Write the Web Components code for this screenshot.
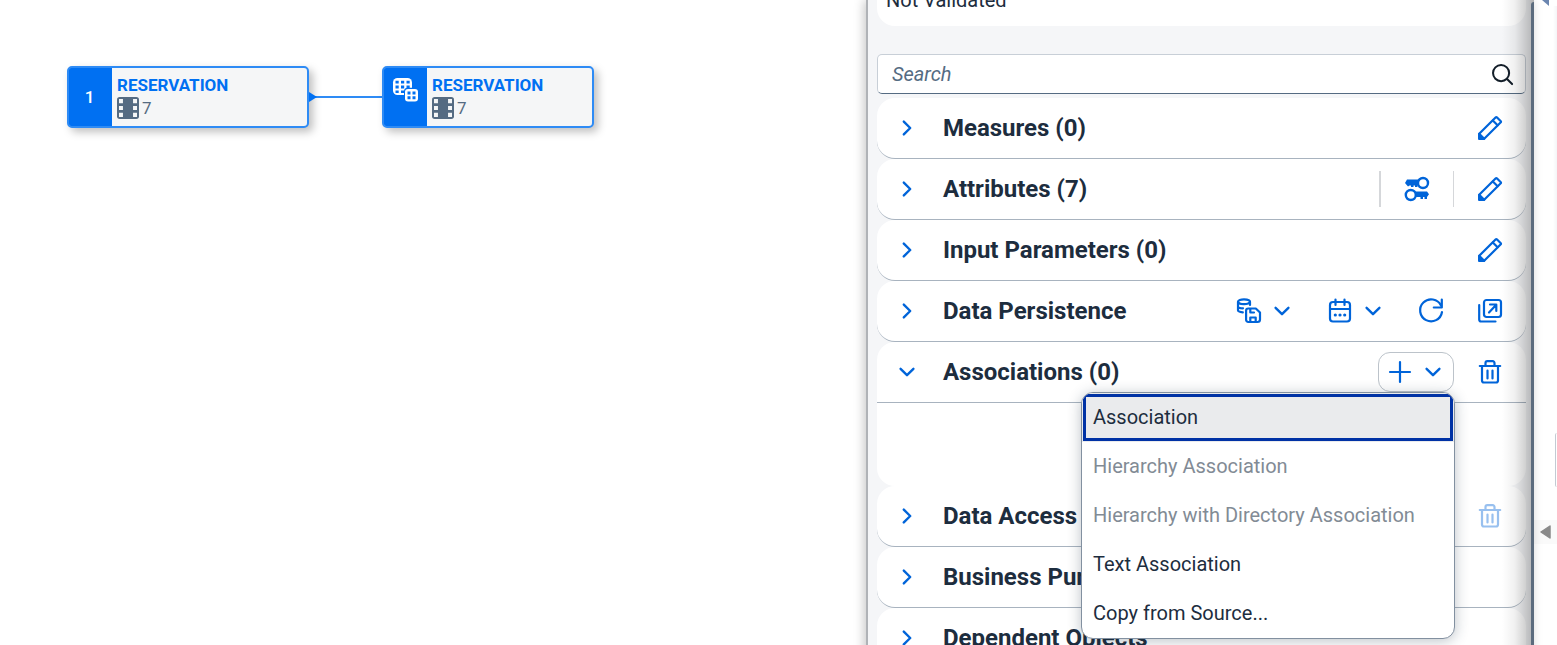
<!DOCTYPE html>
<html lang="en">
<head>
<meta charset="utf-8">
<meta name="viewport" content="width=device-width, initial-scale=1">
<title>View Editor</title>
<style>
    html, body {
        height: 100%;
        margin: 0;
    }

    body {
        font-family: Roboto, "Liberation Sans", sans-serif;
        font-size: 20px;
        line-height: 24px;
        color: #1d2d3e;
        background: #fff;
        overflow: hidden;
    }
</style>
</head>
<body>

<model-editor>
    <model-canvas slot="canvas">
        <model-node name="RESERVATION" columns="7" wide>1</model-node>
        <model-edge></model-edge>
        <model-node name="RESERVATION" columns="7"><ui-icon name="cubes"></ui-icon></model-node>
    </model-canvas>

    <property-panel slot="panel">
        <status-card>Not Validated</status-card>
        <search-field placeholder="Search"></search-field>
        <panel-section heading="Measures (0)">
            <tool-button slot="actions" icon="edit" label="Edit measures"></tool-button>
        </panel-section>
        <panel-section heading="Attributes (7)">
            <tool-separator slot="actions" strong></tool-separator>
            <tool-button slot="actions" icon="keys" label="Set compound key"></tool-button>
            <tool-separator slot="actions"></tool-separator>
            <tool-button slot="actions" icon="edit" label="Edit attributes"></tool-button>
        </panel-section>
        <panel-section heading="Input Parameters (0)">
            <tool-button slot="actions" icon="edit" label="Edit input parameters"></tool-button>
        </panel-section>
        <panel-section heading="Data Persistence" loose>
            <tool-button slot="actions" icon="persist" label="Persist data" menu></tool-button>
            <tool-button slot="actions" icon="calendar" label="Schedule" menu></tool-button>
            <tool-button slot="actions" icon="refresh" label="Refresh"></tool-button>
            <tool-button slot="actions" icon="open" label="Open monitor"></tool-button>
        </panel-section>
        <panel-section heading="Associations (0)" open>
            <menu-anchor slot="actions">
                <tool-button icon="add" label="Add association" menu outlined></tool-button>
                <drop-menu slot="menu">
                    <menu-entry active>Association</menu-entry>
                    <menu-entry disabled>Hierarchy Association</menu-entry>
                    <menu-entry disabled>Hierarchy with Directory Association</menu-entry>
                    <menu-entry>Text Association</menu-entry>
                    <menu-entry>Copy from Source...</menu-entry>
                </drop-menu>
            </menu-anchor>
            <tool-button slot="actions" icon="delete" label="Delete association"></tool-button>
        </panel-section>
        <panel-section heading="Data Access">
            <tool-button slot="actions" icon="delete" label="Delete access control" disabled></tool-button>
        </panel-section>
        <panel-section heading="Business Purpose"></panel-section>
        <panel-section heading="Dependent Objects"></panel-section>
    </property-panel>

    <side-rail slot="rail"></side-rail>
</model-editor>

<script>
(function() {
    // icons share a 24 x 24 grid and take their colour from the text
    const icons = {
        right: '<path d="M8.500 5 15.500 12l-7 7"/>',
        down: '<path d="M5 8.500l7 7 7-7"/>',
        search: '<circle cx="11" cy="11" r="8.800"/><path d="M17.500 17.500 23 23"/>',
        add: '<path d="M12 2v20M2 12h20"/>',
        edit: '<path d="M1.200 22.800v-5L17.800 1.300a.7.7 0 0 1 1 0l4 4a.7.7 0 0 1 0 1L6.200 22.800z"/><path d="M14.800 4.500l4.800 4.800"/><path fill="currentColor" d="M1.200 17.800l5 5h-5z"/>',
        keys: '<g stroke-width="2.400"><circle cx="18" cy="6" r="5"/><circle cx="5.800" cy="18" r="5"/></g>' +
            '<path fill="currentColor" stroke="none" d="M2 2.500h12v6h-1.500V10H10V8.500H8.500V10H6V8.500H4.500L3 9.500 0 6zM10 14.500H22l2 2.800-2 2.700v2h-2.500v-2H18v2h-2.500v-2H10z"/>',
        persist: '<ellipse cx="7" cy="2.800" rx="6" ry="2.400"/><path d="M1 3v8.300c0 1.200 2 1.800 4.800 2M1 7.200c0 1.300 2 2 5 2.100M13 3v3"/>' +
            '<path d="M11.300 9.500h7.500l4.200 4V20.500a2.500 2.500 0 0 1-2.500 2.500h-9.200a2.200 2.200 0 0 1-2.200-2.300V11.700a2.200 2.200 0 0 1 2.200-2.200z"/><path d="M13.300 10v3.500h3.700M13.300 22.800v-4.300h5.400v4.300"/>',
        calendar: '<rect x="2" y="3" width="20" height="19.500" rx="3"/><path d="M2 10h20M7.500.5V6M16.500.5V6"/><path stroke-width="3.200" d="M7.300 16h.01M12 16h.01M16.700 16h.01"/>',
        refresh: '<path d="M22 6.500A11 11 0 1 0 23 13"/><path d="M22.800.5v8h-8"/>',
        open: '<rect x="6" y="1" width="17" height="17" rx="2.500"/><path d="M1.200 6v14.500a2 2 0 0 0 2 2H17.500M11 13.500l7-7.500M12 5.500h6.300v6.500"/>',
        delete: '<path d="M1.800 6h20.400M4 6v14.500a2 2 0 0 0 2 2h12a2 2 0 0 0 2-2V6M7.500 6V3a1.800 1.800 0 0 1 1.800-1.800h5.400A1.800 1.800 0 0 1 16.500 3v3M9.500 10.500v8M14.500 10.500v8"/>',
        cubes: '<g stroke="none"><rect fill="currentColor" width="19" height="17" rx="4.500"/>' +
            '<path fill="#0070f2" d="M2.500 2.800h3.200v2.700H2.500zM8 2.800h3.200v2.700H8zM13.500 2.800h3.200v2.700h-3.200zM2.500 7.500h3.200v3H2.500zM8 7.500h3.200v3H8zM13.500 7.500h3.200v3h-3.200zM2.500 12.500h3.200v2.500H2.500zM8 12.500h3.200v2.500H8z"/>' +
            '<rect fill="#0070f2" x="11" y="9.800" width="15" height="15" rx="3.500"/><rect fill="currentColor" x="12" y="11" width="13" height="12.500" rx="3"/>' +
            '<path fill="#0070f2" d="M14.500 13.500h3v3h-3zM19.500 13.500h3v3h-3zM14.500 18.300h3v3h-3zM19.500 18.300h3v3h-3z"/></g>',
        film: '<rect fill="currentColor" stroke="none" x="0" y="0" width="24" height="24" rx="3"/>' +
            '<path fill="#f5f6f7" stroke="none" d="M2.200 2.200h4.300v4.600H2.200zM2.200 9.700h4.300v4.600H2.200zM2.200 17.200h4.300v4.600H2.200zM17.500 2.200h4.300v4.600h-4.300zM17.500 9.700h4.300v4.600h-4.300zM17.500 17.200h4.300v4.600h-4.300z"/>'
    };

    function icon(name) {
        return `<svg viewBox="0 0 24 24" width="24" height="24" fill="none" stroke="currentColor" stroke-width="2.200" stroke-linejoin="round" stroke-linecap="round" aria-hidden="true">${icons[name]}</svg>`;
    }

    class BaseElement extends HTMLElement {
        connectedCallback() {
            if (this.shadowRoot) {
                return;
            }

            const template = document.createElement('template');
            template.innerHTML = this.template();

            this.attachShadow({mode: 'open'});
            this.shadowRoot.appendChild(template.content.cloneNode(true));
        }

        attr(name) {
            return this.getAttribute(name) || '';
        }
    }

    class UiIcon extends BaseElement {
        template() {
            return `
<style>
    :host { display: block; height: 24px; }
    svg { display: block; overflow: visible; }
</style>
${icon(this.attr('name'))}`;
        }
    }

    class ModelEditor extends BaseElement {
        template() {
            return `
<style>
    :host {
        display: grid;
        grid-template-columns: minmax(0, 35fr) minmax(0, 27fr) 23px;
        height: 100vh;
    }
</style>
<slot name="canvas"></slot>
<slot name="panel"></slot>
<slot name="rail"></slot>`;
        }
    }

    class ModelCanvas extends BaseElement {
        template() {
            return `
<style>
    :host {
        display: flex;
        flex-direction: column;
        justify-content: space-between;
        min-width: 0;
        overflow: hidden;
    }
    .flow {
        display: flex;
        align-items: center;
        padding: 66px 0 0 67px;
    }
    .handle {
        align-self: flex-end;
        width: 21px;
        height: 3px;
        margin-right: 9px;
        background: #b9c3d0;
        clip-path: polygon(0 0, 100% 0, 80% 100%, 0 100%);
    }
</style>
<div class="flow"><slot></slot></div>
<div class="handle"></div>`;
        }
    }

    class ModelNode extends BaseElement {
        template() {
            return `
<style>
    :host {
        display: flex;
        box-sizing: border-box;
        width: 212px;
        height: 62px;
        border: 2px solid #2e8bf5;
        border-radius: 5px;
        overflow: hidden;
        font-size: 17px;
        line-height: 24px;
        background: #f5f6f7;
        box-shadow: 4px 4px 8px rgba(0, 0, 0, .25);
    }
    :host([wide]) { width: 242px; }
    .type {
        display: flex;
        align-items: center;
        justify-content: center;
        box-sizing: border-box;
        width: 41px;
        font-weight: 500;
        color: #fff;
        background: #0070f2;
        box-shadow: 0 0 0 2px #0070f2;
    }
    :host(:not([wide])) .type {
        align-items: flex-start;
        padding-top: 10px;
    }
    .text { padding: 6px 0 0 7px; }
    .name {
        line-height: 22px;
        color: #0070f2;
        font-weight: 700;
    }
    .count {
        display: flex;
        align-items: center;
        gap: 3px;
        color: #556b82;
    }
    .count svg { width: 22px; height: 22px; }
</style>
<div class="type"><slot></slot></div>
<div class="text">
    <div class="name">${this.attr('name')}</div>
    <div class="count">${icon('film')}<span>${this.attr('columns')}</span></div>
</div>`;
        }
    }

    class ModelEdge extends BaseElement {
        template() {
            return `
<style>
    :host { display: block; width: 73px; height: 12px; }
    svg { display: block; }
</style>
<svg width="73" height="12" aria-hidden="true">
    <path d="M0 6h73" stroke="#2e8bf5" stroke-width="2"/>
    <path d="M0 1l8 5-8 5z" fill="#0070f2"/>
</svg>`;
        }
    }

    class PropertyPanel extends BaseElement {
        template() {
            return `
<style>
    :host {
        display: block;
        position: relative;
        min-width: 0;
        border-left: 2px solid #b0b3b7;
        box-sizing: border-box;
        background: #f5f6f8;
        box-shadow: -2px 0 10px rgba(0, 0, 0, .22);
    }
    .list {
        display: flex;
        flex-direction: column;
        box-sizing: border-box;
        height: 100%;
        padding: 0 8px 0 9px;
        overflow: hidden;
    }
    /* the list is scrolled part way past the status line */
    ::slotted(status-card) { margin-top: -12px; }
    .shade, .thumb { position: absolute; pointer-events: none; }
    .shade {
        inset: 0 0 0 auto;
        width: 32px;
        background: linear-gradient(to right, rgba(0, 0, 0, 0), rgba(0, 0, 0, .06) 40%, rgba(0, 0, 0, .28));
    }
    .thumb {
        inset: 2px 0 5px auto;
        width: 3px;
        border-radius: 3px 0 0 3px;
        background: #5b6b7d;
    }
</style>
<div class="list"><slot></slot></div>
<div class="shade"></div>
<div class="thumb"></div>`;
        }
    }

    class StatusCard extends BaseElement {
        template() {
            return `
<style>
    :host {
        display: block;
        flex: none;
        padding: 0 9px 14px;
        border-radius: 0 0 18px 18px;
        background: #fff;
    }
</style>
<slot></slot>`;
        }
    }

    class SearchField extends BaseElement {
        template() {
            return `
<style>
    :host {
        display: flex;
        flex: none;
        align-items: center;
        box-sizing: border-box;
        height: 40px;
        margin: 28px 0 4px;
        padding: 0 12px 0 14px;
        border: 1px solid #c8cfd7;
        border-bottom-color: #556b82;
        border-radius: 5px;
        background: #fff;
    }
    input {
        flex: 1;
        min-width: 0;
        padding: 0;
        border: 0;
        outline: 0;
        font: inherit;
        color: inherit;
        background: none;
    }
    input::placeholder { color: #556b82; font-style: italic; opacity: 1; }
    button {
        display: flex;
        padding: 0;
        border: 0;
        color: #131e29;
        background: none;
    }
    svg { width: 22px; height: 22px; overflow: visible; }
</style>
<input type="text" placeholder="${this.attr('placeholder')}" aria-label="${this.attr('placeholder')}">
<button type="button" aria-label="Start search">${icon('search')}</button>`;
        }
    }

    class PanelSection extends BaseElement {
        template() {
            const open = this.hasAttribute('open');

            return `
<style>
    :host {
        display: block;
        flex: none;
        border-radius: 18px;
        background: #fff;
    }
    header {
        display: flex;
        align-items: center;
        box-sizing: border-box;
        height: 61px;
        padding: 0 14px 0 12px;
        border-bottom: 1px solid #a8b3bf;
        border-radius: 18px;
    }
    :host([open]) header { border-radius: 18px 18px 0 0; }
    .toggle {
        display: flex;
        align-items: center;
        justify-content: center;
        width: 36px;
        height: 36px;
        padding: 0;
        border: 0;
        color: #0064d9;
        background: none;
    }
    .toggle svg { width: 22px; height: 22px; stroke-width: 2.6; }
    h2 {
        flex: 1;
        margin: 0 0 0 18px;
        font-size: 24px;
        line-height: 28px;
        font-weight: 700;
        white-space: nowrap;
    }
    .actions { display: flex; align-items: center; gap: 14px; }
    :host([loose]) .actions { gap: 15px; }
    .body { height: 83px; }
</style>
<header>
    <button class="toggle" type="button" aria-expanded="${open}" aria-label="${this.attr('heading')}">${icon(open ? 'down' : 'right')}</button>
    <h2>${this.attr('heading')}</h2>
    <div class="actions"><slot name="actions"></slot></div>
</header>
${open ? '<div class="body"><slot></slot></div>' : ''}`;
        }
    }

    class ToolButton extends BaseElement {
        template() {
            const menu = this.hasAttribute('menu');

            return `
<style>
    :host { display: block; }
    button {
        display: flex;
        align-items: center;
        justify-content: center;
        gap: 10px;
        box-sizing: border-box;
        width: 44px;
        height: 40px;
        padding: 0;
        border: 1px solid transparent;
        border-radius: 12px;
        color: #0064d9;
        background: none;
    }
    :host([menu]) button { width: 76px; }
    :host([outlined]) button { border-color: #bcc3ca; background: #fff; }
    button:disabled { opacity: .4; }
    svg { overflow: visible; }
    .arrow { width: 22px; height: 22px; stroke-width: 2.6; }
</style>
<button type="button" aria-label="${this.attr('label')}" ${this.hasAttribute('disabled') ? 'disabled' : ''}>
    ${icon(this.attr('icon'))}
    ${menu ? icon('down').replace('<svg', '<svg class="arrow"') : ''}
</button>`;
        }
    }

    class ToolSeparator extends BaseElement {
        template() {
            return `
<style>
    :host { display: block; width: 1px; height: 36px; background: #d5d7da; }
    :host([strong]) { width: 2px; }
</style>`;
        }
    }

    class MenuAnchor extends BaseElement {
        template() {
            return `
<style>
    :host { display: block; position: relative; z-index: 2; }
    .popup { position: absolute; top: 100%; right: -1px; }
</style>
<slot></slot>
<div class="popup"><slot name="menu"></slot></div>`;
        }
    }

    class DropMenu extends BaseElement {
        template() {
            return `
<style>
    :host {
        display: block;
        box-sizing: border-box;
        width: 374px;
        border: 1px solid #8290a0;
        border-radius: 12px;
        overflow: hidden;
        background: #fff;
        box-shadow: 0 2px 14px rgba(34, 53, 72, .3);
    }
</style>
<div role="menu"><slot></slot></div>`;
        }
    }

    class MenuEntry extends BaseElement {
        template() {
            return `
<style>
    :host { display: block; }
    button {
        display: block;
        width: 100%;
        height: 49px;
        padding: 0 11px 2px;
        border: 0;
        font: inherit;
        color: #1d2d3e;
        text-align: left;
        white-space: nowrap;
        background: none;
    }
    button:disabled { color: #828b95; }
    :host([active]) button {
        background: #eaebed;
        outline: 3px solid #0032a5;
        outline-offset: -4px;
    }
</style>
<button type="button" role="menuitem" ${this.hasAttribute('disabled') ? 'disabled' : ''}><slot></slot></button>`;
        }
    }

    class SideRail extends BaseElement {
        template() {
            return `
<style>
    :host {
        display: flex;
        flex-direction: column;
        align-items: flex-end;
        height: 100vh;
        overflow: hidden;
    }
    .corner {
        width: 7px;
        height: 6px;
        margin-right: 8px;
        background: #6b86b0;
        clip-path: polygon(0 0, 100% 0, 100% 100%);
    }
    .edge {
        width: 4px;
        height: 254px;
        background: linear-gradient(to right, #fff, #f4f5f7);
    }
    .box {
        box-sizing: border-box;
        width: 2px;
        height: 54px;
        margin-top: 173px;
        border-left: 1px solid #c3cad3;
        border-radius: 4px 0 0 4px;
    }
    button {
        display: flex;
        align-items: center;
        justify-content: center;
        width: 23px;
        height: 24px;
        margin-top: 33px;
        padding: 0;
        border: 0;
        background: #fafafa;
    }
</style>
<div class="corner"></div>
<div class="edge"></div>
<div class="box"></div>
<button type="button" aria-label="Expand">
    <svg width="12" height="14" aria-hidden="true"><path d="M1 7l9-6v12z" fill="#8a8a8a" stroke="#8a8a8a" stroke-width="1.500" stroke-linejoin="round"/></svg>
</button>`;
        }
    }

    customElements.define('ui-icon', UiIcon);
    customElements.define('model-editor', ModelEditor);
    customElements.define('model-canvas', ModelCanvas);
    customElements.define('model-node', ModelNode);
    customElements.define('model-edge', ModelEdge);
    customElements.define('property-panel', PropertyPanel);
    customElements.define('status-card', StatusCard);
    customElements.define('search-field', SearchField);
    customElements.define('panel-section', PanelSection);
    customElements.define('tool-button', ToolButton);
    customElements.define('tool-separator', ToolSeparator);
    customElements.define('menu-anchor', MenuAnchor);
    customElements.define('drop-menu', DropMenu);
    customElements.define('menu-entry', MenuEntry);
    customElements.define('side-rail', SideRail);
})();
</script>
</body>
</html>
